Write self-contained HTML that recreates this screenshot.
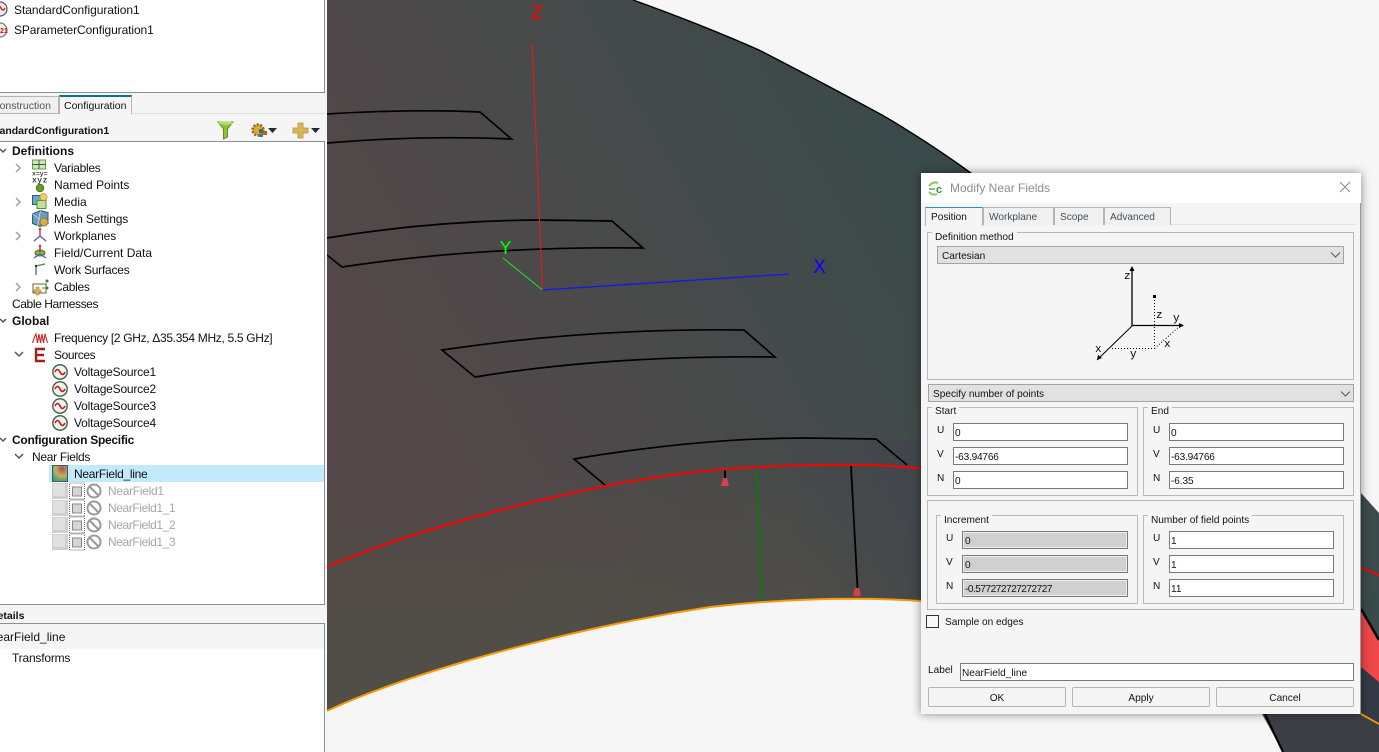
<!DOCTYPE html>
<html><head><meta charset="utf-8"><style>
*{box-sizing:border-box}
html,body{margin:0;padding:0;width:1379px;height:752px;overflow:hidden;background:#f6f6f6;font-family:"Liberation Sans",sans-serif;font-size:12px;color:#111}
#v{position:absolute;left:0;top:0}
.a{position:absolute}
.t{position:absolute;white-space:nowrap;line-height:16px;height:16px}
.b{font-weight:bold}
.g{color:#a6a6a6}
#left{position:absolute;left:0;top:0;width:327px;height:752px;background:#f5f5f5;overflow:hidden}
.dlg{font-size:10.1px}
.f{position:absolute;height:18px;border:1px solid #7a7a7a;background:#fff;line-height:19px;padding-left:1px;font-size:10.1px;white-space:nowrap}
.f.d{background:#d0d0d0;border:1px solid #7a7a7a;box-shadow:inset 0 0 0 1px #eee;padding-left:2px}
.gb{position:absolute;border:1px solid #b9b9b9}
.lg{position:absolute;background:#f5f5f5;padding:0 3px;line-height:14px;height:12px;font-size:10.1px;white-space:nowrap}
.l{position:absolute;font-size:10.1px;line-height:12px;white-space:nowrap}
.cb{position:absolute;border:1px solid #a3a3a3;background:#e1e1e1;height:18px;line-height:19px;font-size:10.1px;padding-left:4px}
.btn{position:absolute;top:514px;height:20px;width:138px;border:1px solid #b5b5b5;border-radius:2px;background:#f5f5f5;text-align:center;line-height:21px;font-size:10.1px}
.tab{position:absolute;top:34px;height:18px;background:#f0f0f0;border:1px solid #b4b4b4;border-bottom:none;line-height:19px;padding-left:5px;color:#44505a;font-size:10.1px}
</style></head><body>
<svg id="v" width="1379" height="752" viewBox="0 0 1379 752">
<defs>
<linearGradient id="g1" gradientUnits="userSpaceOnUse" x1="380" y1="430" x2="930" y2="120"><stop offset="0" stop-color="#544749"/><stop offset=".5" stop-color="#484a4a"/><stop offset="1" stop-color="#394a4a"/></linearGradient>
<linearGradient id="g2" gradientUnits="userSpaceOnUse" x1="500" y1="640" x2="500" y2="470"><stop offset="0" stop-color="#504e46"/><stop offset="1" stop-color="#504e46" stop-opacity="0"/></linearGradient>
<linearGradient id="g3" gradientUnits="userSpaceOnUse" x1="780" y1="500" x2="925" y2="460"><stop offset="0" stop-color="#42464c" stop-opacity="0"/><stop offset="1" stop-color="#42464c"/></linearGradient>
</defs>
<rect width="1379" height="752" fill="#f6f6f6"/>
<path id="sh" d="M327 0L633 0Q700 24 759 50Q825 84 882 115Q930 143 975 176L1361 493L1379 513L1379 752L1283 752L1265 714L921 601C850 596 770 600 710 607C560 630 400 676 327 711Z" fill="url(#g1)"/>
<path d="M327 400L921 400L921 601C850 596 770 600 710 607C560 630 400 676 327 711Z" fill="url(#g2)"/>
<path d="M760 440L925 440L925 601C850 596 800 597 760 602Z" fill="url(#g3)"/>
<path d="M1262 714L1379 714L1379 752L1283 752Z" fill="#3c4046"/>
<path d="M1361 500L1379 515L1379 590L1361 600Z" fill="#3b4a4a"/>
<path d="M1361 667L1379 682L1379 724L1361 714Z" fill="#333a46"/>
<path d="M1361 610L1379 640L1379 682L1361 667Z" fill="#f0474b"/>
<path d="M1361 609L1379 640" stroke="#000" stroke-width="2.500" fill="none"/>
<path d="M1361 568L1379 575" stroke="#f00" stroke-width="1.800" fill="none"/>
<path d="M1361 714L1379 724" stroke="#f90" stroke-width="1.800" fill="none"/>
<path d="M1265 714L1283 752" stroke="#000" stroke-width="2.200" fill="none"/>
<path d="M633 0Q700 24 759 50Q825 84 882 115Q930 143 975 176" stroke="#000" stroke-width="1.400" fill="none"/>
<g fill="none" stroke="#000" stroke-width="1.700">
<path d="M327 114Q390 110 453 111L480 112L511.500 139Q420 135 327 143"/>
<path d="M327 238Q430 221 537 220L612 221L643 248Q480 246 342 267L327 255"/>
<path d="M442 350Q590 328 744 330L775 357Q610 355 475 377Z"/>
<path d="M605 485L574 459Q700 438 805 438L876 439L907 465"/>
<path d="M851 466L857.500 588" stroke-width="1.800"/>
<path d="M725 470L725 478" stroke-width="1.800"/>
</g>
<path d="M756.500 469L762 601" stroke="#0a7a0a" stroke-width="1.800" fill="none"/>
<path d="M327 567C 400 535 510 505 606 486S 780 464 874 465L921 468" stroke="#f00" stroke-width="2" fill="none"/>
<path d="M327 711C400 676 560 630 710 607C770 600 850 596 921 601" stroke="#f79a0a" stroke-width="2" fill="none"/>
<path d="M723 478h4l2 8h-8zM855 588h4l2 8h-8z" fill="#d9414a"/>
<path d="M532 43L542.500 290" stroke="#e81818" stroke-width="1.100" fill="none"/>
<path d="M542.500 290L789 274" stroke="#1414f0" stroke-width="1.300" fill="none"/>
<path d="M503 258L542.500 290" stroke="#18e818" stroke-width="1" fill="none"/>
<text x="530" y="19" font-family="DejaVu Sans, sans-serif" font-size="19" fill="#f00">Z</text>
<text x="500" y="254" font-family="DejaVu Sans, sans-serif" font-size="18" fill="#0f0">Y</text>
<text x="813" y="273" font-family="DejaVu Sans, sans-serif" font-size="19" fill="#10f">X</text>
</svg>

<div id="left">
<div class="a" style="left:-2px;top:-2px;width:327px;height:95px;background:#fff;border:1px solid #8a8f94"></div>
<svg class="a" style="left:0;top:0" width="12" height="40"><circle cx="0" cy="9" r="7" fill="#eee" stroke="#556" stroke-width="1.200"/><path d="M-3 8q2-4 4 0t4 0" stroke="#c22" fill="none" stroke-width="1.400"/><circle cx="0" cy="30" r="7" fill="#eee" stroke="#777" stroke-width="1.200"/><text x="0" y="33" font-size="7" font-weight="bold" fill="#b22" font-family="Liberation Sans,sans-serif">21</text></svg>
<div class="t" style="left:14px;top:2px;letter-spacing:-.05px">StandardConfiguration1</div>
<div class="t" style="left:14px;top:22px;letter-spacing:-.1px">SParameterConfiguration1</div>

<div class="a" style="left:0;top:113px;width:325px;height:1px;background:#dcdfe1"></div>
<div class="a" style="left:-10px;top:96px;width:69px;height:18px;border:1px solid #b4b4b4;background:#f0f0f0"></div>
<div class="t" style="left:-8px;top:98px;font-size:10.500px;color:#555">Construction</div>
<div class="a" style="left:59px;top:95px;width:73px;height:19px;border:1px solid #b4b4b4;border-top:2px solid #0f6f93;border-bottom:none;background:#f5f5f5"></div>
<div class="t" style="left:64px;top:98px;font-size:10.500px">Configuration</div>
<div class="t b" style="left:-11px;top:123px;font-size:10.500px">StandardConfiguration1</div>

<svg class="a" style="left:215px;top:119px" width="110" height="22">
<path d="M3 3h15l-5.500 7v8l-4 2v-10z" fill="#8fc23a" stroke="#5f8f22" stroke-width="1"/><ellipse cx="10.500" cy="4" rx="7.500" ry="1.800" fill="#b5db6d"/>
<circle cx="43" cy="11" r="5.500" fill="#d6a93a" stroke="#8a6a1c" stroke-width="2.500" stroke-dasharray="2 1.500"/><rect x="44" y="10" width="4" height="4" fill="#3a7a4a"/><rect x="48" y="12" width="4" height="4" fill="#c4562a"/><rect x="44" y="15" width="4" height="3" fill="#3a78b4"/>
<path d="M53 9h9l-4.500 5z" fill="#222a33"/>
<path d="M83 4h5v5h5v5h-5v5h-5v-5h-5v-5h5z" fill="#d9b656" stroke="#b5923b" stroke-width=".8"/>
<path d="M96 9h9l-4.500 5z" fill="#222a33"/>
</svg>

<div class="a" style="left:-2px;top:141px;width:327px;height:464px;background:#fff;border:1px solid #8a8f94"></div>
<div class="a" style="left:49px;top:465px;width:275px;height:17px;background:#c3eafc"></div>

<div class="t b" style="left:12px;top:143px">Definitions</div>
<div class="t" style="left:54px;top:160px;letter-spacing:-.3px">Variables</div>
<div class="t" style="left:54px;top:177px">Named Points</div>
<div class="t" style="left:54px;top:194px">Media</div>
<div class="t" style="left:54px;top:211px;letter-spacing:-.15px">Mesh Settings</div>
<div class="t" style="left:54px;top:228px;letter-spacing:-.1px">Workplanes</div>
<div class="t" style="left:54px;top:245px">Field/Current Data</div>
<div class="t" style="left:54px;top:262px;letter-spacing:-.23px">Work Surfaces</div>
<div class="t" style="left:54px;top:279px;letter-spacing:-.3px">Cables</div>
<div class="t" style="left:12px;top:296px;letter-spacing:-.4px">Cable Harnesses</div>
<div class="t b" style="left:12px;top:313px">Global</div>
<div class="t" style="left:54px;top:330px;letter-spacing:-.32px">Frequency [2 GHz, Δ35.354 MHz, 5.5 GHz]</div>
<div class="t" style="left:54px;top:347px;letter-spacing:-.4px">Sources</div>
<div class="t" style="left:74px;top:364px;letter-spacing:-.2px">VoltageSource1</div>
<div class="t" style="left:74px;top:381px;letter-spacing:-.2px">VoltageSource2</div>
<div class="t" style="left:74px;top:398px;letter-spacing:-.2px">VoltageSource3</div>
<div class="t" style="left:74px;top:415px;letter-spacing:-.2px">VoltageSource4</div>
<div class="t b" style="left:12px;top:432px;letter-spacing:-.27px">Configuration Specific</div>
<div class="t" style="left:32px;top:449px;letter-spacing:-.3px">Near Fields</div>
<div class="t" style="left:74px;top:466px;letter-spacing:-.28px">NearField_line</div>
<div class="t g" style="left:108px;top:483px;letter-spacing:-.3px">NearField1</div>
<div class="t g" style="left:108px;top:500px;letter-spacing:-.4px">NearField1_1</div>
<div class="t g" style="left:108px;top:517px;letter-spacing:-.4px">NearField1_2</div>
<div class="t g" style="left:108px;top:534px;letter-spacing:-.4px">NearField1_3</div>

<svg class="a" style="left:0;top:141px" width="110" height="420" viewBox="0 141 110 420">
<defs>
<g id="vs"><circle r="7.200" fill="#f2f2f2" stroke="#4a6a50" stroke-width="1.500"/><path d="M-5 0q2.500-5 5 0t5 0" stroke="#d01818" fill="none" stroke-width="1.600"/></g>
<g id="ds"><rect x="-8" y="-8" width="16" height="16" fill="#cfcfcf"/><rect x="-7" y="-7" width="12" height="12" fill="#e0e0e0"/><rect x="9.500" y="-8" width="15" height="16" fill="#fff" stroke="#666" stroke-dasharray="1 1"/><rect x="12.500" y="-4" width="9" height="9" fill="#d6d6d6" stroke="#888"/><circle cx="34" cy="0" r="6.500" fill="none" stroke="#999" stroke-width="2"/><path d="M29.500 -4.500L38.500 4.500" stroke="#999" stroke-width="2"/></g>
<path id="cr" d="M-3 -4L1 0L-3 4" fill="none" stroke="#a0a0a0" stroke-width="1.500"/>
<path id="cd" d="M-4 -2L0 2L4 -2" fill="none" stroke="#555" stroke-width="1.500"/>
</defs>
<path d="M0 149l3 3 3-3" fill="none" stroke="#555" stroke-width="1.500"/>
<path d="M0 319l3 3 3-3" fill="none" stroke="#555" stroke-width="1.500"/>
<path d="M0 438l3 3 3-3" fill="none" stroke="#555" stroke-width="1.500"/>
<use href="#cr" x="19" y="168"/><use href="#cr" x="19" y="202"/><use href="#cr" x="19" y="236"/><use href="#cr" x="19" y="287"/>
<use href="#cd" x="19" y="354"/><use href="#cd" x="19" y="456"/>
<!-- Variables -->
<rect x="32.500" y="160" width="13" height="9" fill="#cfe6b0" stroke="#6d9a45"/><path d="M39 160v9M32.500 164.500h13" stroke="#355" stroke-width=".9"/>
<text x="32" y="175.500" font-family="Liberation Mono,monospace" font-size="6.500" font-weight="bold" fill="#444">x=y=</text>
<!-- Named Points -->
<text x="32" y="182.500" font-family="Liberation Mono,monospace" font-size="8" font-weight="bold" letter-spacing=".5" fill="#444">xyz</text><circle cx="40" cy="188" r="3.800" fill="#6b9a2c" stroke="#48701a" stroke-width=".8"/>
<!-- Media -->
<rect x="32.500" y="195.500" width="10" height="9" fill="#6ea5c8" stroke="#2a5a7a"/><rect x="37" y="200.500" width="9" height="8" fill="#bfe09a" stroke="#5f8a3a"/><circle cx="43.500" cy="197" r="3.500" fill="#f4cf5b" stroke="#c0902b" stroke-width=".8"/>
<!-- Mesh -->
<path d="M32.500 214l8-3.500 7.500 2v11l-8 3-7.500-3z" fill="#6b9cbd" stroke="#33566a"/><path d="M32.500 214l11 8M40.500 210.500l-3 16" stroke="#dde" stroke-width=".7"/><circle cx="44" cy="222" r="4" fill="#d6b044" stroke="#8b6c1c" stroke-width=".8"/>
<!-- Workplanes -->
<path d="M40 236v-7" stroke="#c22" stroke-width="1.300"/><path d="M40 236l-6 5" stroke="#5a55c0" stroke-width="1.300"/><path d="M40 236l6 5" stroke="#5a55c0" stroke-width="1.300"/><path d="M38.500 230l1.500-3 1.500 3z" fill="#c22"/>
<!-- Field -->
<ellipse cx="40" cy="253" rx="5" ry="3" fill="#7fae44" stroke="#4d7222"/><path d="M40 252v-7" stroke="#c22" stroke-width="1.300"/><path d="M38.500 247l1.500-3 1.500 3z" fill="#c22"/><path d="M40 254l-6 4M40 254l6 4" stroke="#5a55c0" stroke-width="1.300"/>
<!-- Work surfaces -->
<path d="M36 266v9" stroke="#5a55c0" stroke-width="1.300"/><path d="M36 266l9-2" stroke="#4a8a3a" stroke-width="1.300"/><circle cx="36" cy="266" r="1.200" fill="#333"/>
<!-- Cables -->
<rect x="33" y="284" width="13" height="9" fill="none" stroke="#7a5a2c"/><path d="M36 287h3v3h2v2h-2v3h-3v-3h-2v-2h2z" fill="#d9b656" stroke="#a5823a" stroke-width=".6"/><path d="M42 284h5M42 288h5" stroke="#4a7a3a"/><circle cx="47" cy="281" r="1.500" fill="#4a7a3a"/><circle cx="47" cy="288" r="1.500" fill="#4a7a3a"/>
<!-- Frequency -->
<path d="M32.500 343L34.500 337L36 334L37.500 343L39 334L40.500 343L42 334L43.500 343L45 334L47.500 343" fill="none" stroke="#c22a22" stroke-width="1.100"/>
<!-- E -->
<path d="M35 349h10M35 355h9M35 361h10M36 348v14" stroke="#a0221c" stroke-width="2.400" fill="none"/>
<use href="#vs" x="60" y="372"/><use href="#vs" x="60" y="389"/><use href="#vs" x="60" y="406"/><use href="#vs" x="60" y="423"/>
<!-- NF line -->
<defs><radialGradient id="nf" cx=".65" cy=".2" r=".9"><stop offset="0" stop-color="#b04a5a"/><stop offset=".5" stop-color="#c2b060"/><stop offset="1" stop-color="#3a9a7a"/></radialGradient></defs>
<rect x="52.500" y="465.500" width="15" height="16" fill="url(#nf)" stroke="#2d5f6a"/>
<use href="#ds" x="60" y="491"/><use href="#ds" x="60" y="508"/><use href="#ds" x="60" y="525"/><use href="#ds" x="60" y="542"/>
</svg>

<div class="t b" style="left:-10px;top:608px;font-size:10.500px">Details</div>
<div class="a" style="left:-2px;top:623px;width:327px;height:131px;background:#fff;border:1px solid #8a8f94"></div>
<div class="a" style="left:0;top:624px;width:324px;height:25px;background:#f5f5f5"></div>
<div class="t" style="left:-12px;top:629px">NearField_line</div>
<div class="t" style="left:12px;top:650px;letter-spacing:-.2px">Transforms</div>
</div>

<div class="a dlg" style="left:921px;top:173px;width:440px;height:541px;background:#f5f5f5;box-shadow:0 0 9px rgba(0,0,0,.45);border-right:1px solid #9a9a9a">
<div class="a" style="left:0;top:0;width:440px;height:30px;background:#fff"></div>
<svg class="a" style="left:7px;top:8px" width="18" height="15"><path d="M1 5q4-5 9-3M1 11q4 4 8 2" stroke="#8cc46a" stroke-width="2" fill="none"/><path d="M1 8h6" stroke="#8cc46a" stroke-width="2"/><text x="8" y="12" font-size="11" font-weight="bold" fill="#2f8f3f" font-family="Liberation Sans,sans-serif">c</text></svg>
<div class="t" style="left:29px;top:7px;font-size:12px;color:#8d8d8d">Modify Near Fields</div>
<svg class="a" style="left:418px;top:8px" width="13" height="13"><path d="M1 1L11 11M11 1L1 11" stroke="#888" stroke-width="1"/></svg>

<div class="a" style="left:3px;top:51px;width:433px;height:1px;background:#dbe3e8"></div>
<div class="tab" style="left:4px;width:58px;height:19px;top:34px;background:#f5f5f5;border-top:1px solid #2f8fc4;color:#111">Position</div>
<div class="tab" style="left:62px;width:71px">Workplane</div>
<div class="tab" style="left:133px;width:50px">Scope</div>
<div class="tab" style="left:183px;width:67px">Advanced</div>

<div class="gb" style="left:6px;top:59px;width:427px;height:148px"></div>
<div class="lg" style="left:11px;top:58px">Definition method</div>
<div class="cb" style="left:16px;top:73px;width:407px">Cartesian</div>
<svg class="a" style="left:409px;top:78px" width="12" height="8"><path d="M1 1.500L5.500 6L10 1.500" stroke="#555" fill="none"/></svg>

<svg class="a" style="left:159px;top:90px" width="110" height="105" viewBox="1080 263 110 105">
<g stroke="#000" fill="none">
<path d="M1132 268v58M1132 325.500h50" stroke-width="1.300"/>
<path d="M1132 326L1097 360"/>
<path d="M1154.500 297V348M1112 348.500H1154.500M1154.500 348.500L1180 326" stroke-dasharray="1 2"/>
</g>
<path d="M1129.500 271L1132 266L1134.500 271zM1179 323L1184 325.500L1179 328zM1097 360L1098 355L1102 358z" fill="#000"/>
<rect x="1153" y="295" width="3" height="3" fill="#000"/>
<g font-family="Liberation Mono,monospace" font-size="11" fill="#000"><text x="1124" y="279">z</text><text x="1156" y="318">z</text><text x="1173" y="321">y</text><text x="1095" y="352">x</text><text x="1130" y="357">y</text><text x="1164" y="347">x</text></g>
</svg>

<div class="cb" style="left:7px;top:211px;width:426px">Specify number of points</div>
<svg class="a" style="left:419px;top:217px" width="12" height="8"><path d="M1 1.500L5.500 6L10 1.500" stroke="#555" fill="none"/></svg>

<div class="gb" style="left:6px;top:234px;width:211px;height:89px"></div>
<div class="lg" style="left:11px;top:232px">Start</div>
<div class="l" style="left:16px;top:252px">U</div><div class="f" style="left:32px;top:250px;width:175px">0</div>
<div class="l" style="left:16px;top:276px">V</div><div class="f" style="left:32px;top:274px;width:175px;letter-spacing:-.2px">-63.94766</div>
<div class="l" style="left:16px;top:300px">N</div><div class="f" style="left:32px;top:298px;width:175px">0</div>

<div class="gb" style="left:222px;top:234px;width:211px;height:89px"></div>
<div class="lg" style="left:227px;top:232px">End</div>
<div class="l" style="left:232px;top:252px">U</div><div class="f" style="left:248px;top:250px;width:175px">0</div>
<div class="l" style="left:232px;top:276px">V</div><div class="f" style="left:248px;top:274px;width:175px;letter-spacing:-.2px">-63.94766</div>
<div class="l" style="left:232px;top:300px">N</div><div class="f" style="left:248px;top:298px;width:175px;letter-spacing:-.1px">-6.35</div>

<div class="gb" style="left:6px;top:327px;width:427px;height:110px"></div>
<div class="gb" style="left:15px;top:342px;width:202px;height:89px"></div>
<div class="lg" style="left:20px;top:341px">Increment</div>
<div class="l" style="left:25px;top:360px">U</div><div class="f d" style="left:41px;top:358px;width:166px">0</div>
<div class="l" style="left:25px;top:384px">V</div><div class="f d" style="left:41px;top:382px;width:166px">0</div>
<div class="l" style="left:25px;top:408px">N</div><div class="f d" style="left:41px;top:406px;width:166px;letter-spacing:-.5px">-0.577272727272727</div>

<div class="gb" style="left:222px;top:342px;width:201px;height:89px"></div>
<div class="lg" style="left:227px;top:341px">Number of field points</div>
<div class="l" style="left:232px;top:360px">U</div><div class="f" style="left:248px;top:358px;width:165px">1</div>
<div class="l" style="left:232px;top:384px">V</div><div class="f" style="left:248px;top:382px;width:165px">1</div>
<div class="l" style="left:232px;top:408px">N</div><div class="f" style="left:248px;top:406px;width:165px">11</div>

<div class="a" style="left:5px;top:442px;width:13px;height:13px;border:1px solid #333;background:#f8f8f8"></div>
<div class="l" style="left:24px;top:444px">Sample on edges</div>
<div class="l" style="left:7px;top:492px">Label</div>
<div class="f" style="left:39px;top:490px;width:394px">NearField_line</div>
<div class="btn" style="left:7px">OK</div>
<div class="btn" style="left:151px">Apply</div>
<div class="btn" style="left:295px">Cancel</div>
</div>
</body></html>
